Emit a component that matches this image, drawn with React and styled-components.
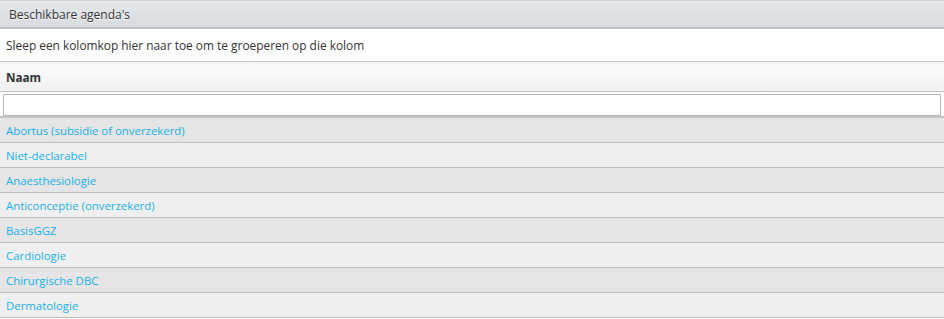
import React from "react";
import styled, { createGlobalStyle } from "styled-components";

const Global = createGlobalStyle`
  html, body { margin: 0; padding: 0; background: #ffffff; }
  body { font-family: "Open Sans", "Noto Sans", sans-serif; font-size: 12px; color: #333; }
`;

const Panel = styled.div`
  width: 944px;
  display: flex;
  flex-direction: column;
`;

const TitleBar = styled.div`
  height: 26px;
  border-top: 1px solid #cfd2d4;
  border-bottom: 2px solid #bfc2c5;
  background: linear-gradient(#e6e9eb, #d7dbde);
  display: flex;
  align-items: center;
  padding-left: 9px;
  font-size: 12px;
  color: #333;
  text-shadow: 0 1px 0 rgba(255,255,255,0.7);
`;

const GroupArea = styled.div`
  height: 32px;
  display: flex;
  align-items: center;
  padding-left: 6px;
  background: #fff;
  border-bottom: 1px solid #c4c4c4;
  font-size: 11.9px;
  color: #333;
`;

const HeaderRow = styled.div`
  height: 29px;
  display: flex;
  align-items: center;
  padding-left: 6px;
  background: linear-gradient(#f4f4f4, #fafafa 12%, #f0f0f0);
  border-bottom: 1px solid #c2c2c2;
  font-weight: 700;
  font-size: 11.7px;
  color: #333;
`;

const FilterRow = styled.div`
  height: 26px;
  padding: 2px 3px 0 3px;
  box-sizing: border-box;
  border-bottom: 2px solid #c4c4c4;
  background: #fff;
  display: flex;
`;

const FilterInput = styled.input`
  flex: 1;
  height: 22px;
  box-sizing: border-box;
  border: 1px solid #b9b9b9;
  background: #fff;
  margin: 0;
  padding: 0 4px;
  outline: none;
`;

const Row = styled.div`
  height: 24px;
  border-bottom: 1px solid #bdbdbd;
  background: ${p => (p.$alt ? "#efefef" : "#e5e5e5")};
  display: flex;
  align-items: center;
  padding-left: 6px;
`;

const Link = styled.a`
  color: #17b0ea;
  font-size: 11.4px;
  text-decoration: none;
  cursor: pointer;
`;

const items = [
  "Abortus (subsidie of onverzekerd)",
  "Niet-declarabel",
  "Anaesthesiologie",
  "Anticonceptie (onverzekerd)",
  "BasisGGZ",
  "Cardiologie",
  "Chirurgische DBC",
  "Dermatologie",
];

export default function App() {
  return (
    <>
      <Global />
      <Panel>
        <TitleBar>Beschikbare agenda's</TitleBar>
        <GroupArea>Sleep een kolomkop hier naar toe om te groeperen op die kolom</GroupArea>
        <HeaderRow>Naam</HeaderRow>
        <FilterRow>
          <FilterInput type="text" />
        </FilterRow>
        {items.map((it, i) => (
          <Row key={it} $alt={i % 2 === 1}>
            <Link>{it}</Link>
          </Row>
        ))}
      </Panel>
    </>
  );
}
